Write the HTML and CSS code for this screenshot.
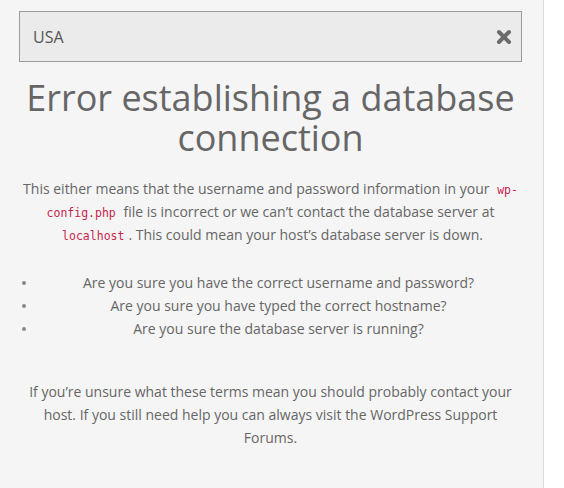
FILE: index.html
```html
<!DOCTYPE html>
<html>
<head>
<meta charset="utf-8">
<link rel="stylesheet" href="styles.css">
</head>
<body>
<div class="panel">
  <div class="search">
    <span class="search-text">USA</span>
    <svg class="clear" width="16" height="16" viewBox="0 0 16 16"><path d="M3 3 L13 13 M13 3 L3 13" stroke="#6b6b6b" stroke-width="4" stroke-linecap="round"/></svg>
  </div>
  <h1 class="title">Error establishing a database connection</h1>
  <p class="text">This either means that the username and password information in your <code>wp-config.php</code> file is incorrect or we can’t contact the database server at <code>localhost</code>. This could mean your host’s database server is down.</p>
  <ul class="checks">
    <li>Are you sure you have the correct username and password?</li>
    <li>Are you sure you have typed the correct hostname?</li>
    <li>Are you sure the database server is running?</li>
  </ul>
  <p class="text text-wide">If you’re unsure what these terms mean you should probably contact your host. If you still need help you can always visit the WordPress Support Forums.</p>
</div>
</body>
</html>
```
FILE: styles.css
```css
html, body {
  margin: 0;
  padding: 0;
  background: #ffffff;
}
body {
  font-family: "Open Sans", "Noto Sans", sans-serif;
  color: #666666;
}
.panel {
  width: 503px;
  min-height: 488px;
  box-sizing: content-box;
  padding: 11px 21px 0 19px;
  background: #f5f5f5;
  border-right: 1px solid #dddddd;
  text-align: center;
}
.search {
  height: 49px;
  border: 1px solid #9a9a9a;
  background: #ebebeb;
  display: flex;
  align-items: center;
  justify-content: space-between;
  padding: 0 9px 0 13px;
}
.search-text {
  font-size: 16px;
  color: #555555;
}
.clear {
  display: block;
}
.title {
  font-size: 36px;
  font-weight: 400;
  line-height: 40px;
  margin: 16px 0 19px;
  color: #666666;
}
.text {
  font-size: 14px;
  line-height: 23px;
  margin: 0;
  padding: 0;
}
code {
  font-family: "DejaVu Sans Mono", monospace;
  font-size: 11.5px;
  line-height: 0;
  vertical-align: baseline;
  color: #c7254e;
  padding: 0 4px;
}
.checks {
  font-size: 14px;
  line-height: 23px;
  margin: 25px 0 40px;
  padding: 0 0 0 16px;
}
.checks li {
  list-style: none;
  position: relative;
}
.checks li::before {
  content: "";
  position: absolute;
  left: -13px;
  top: 10px;
  width: 4px;
  height: 4px;
  border-radius: 50%;
  background: #888888;
}
.text-wide {
  padding: 0 4px;
}
```
